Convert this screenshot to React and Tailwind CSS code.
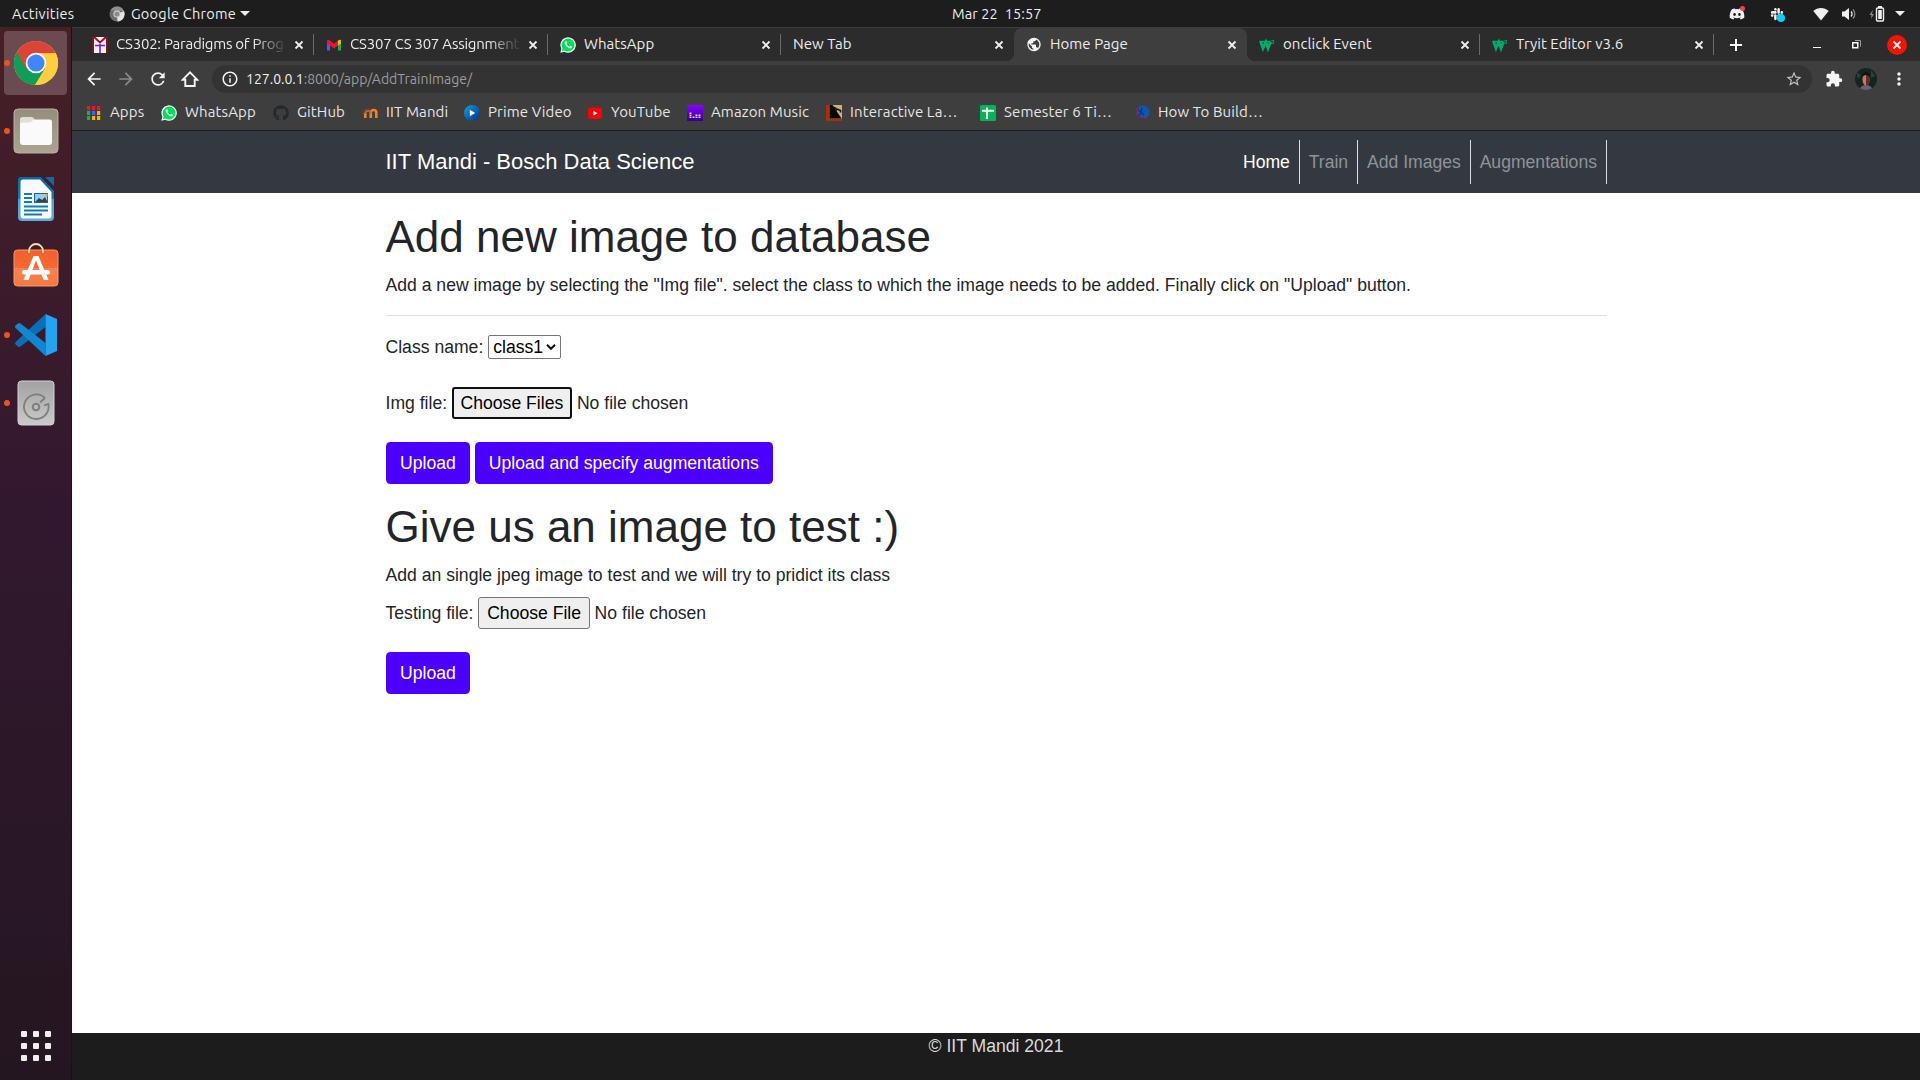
import React from "react";
import { FaGithub, FaDiscord, FaSlack } from "react-icons/fa";
import {
  MdArrowBack,
  MdArrowForward,
  MdRefresh,
  MdInfoOutline,
  MdStarBorder,
  MdExtension,
  MdMoreVert,
  MdPublic,
} from "react-icons/md";

/* ---------- favicons ---------- */

const WhatsAppIcon = () => (
  <svg viewBox="0 0 16 16" className="size-4">
    <path d="M0.300 15.700L1.400 11.800A7.700 7.700 0 1 1 4.300 14.700Z" fill="#fff" />
    <path d="M1.800 14.200L2.600 11.500A6.500 6.500 0 1 1 4.600 13.500Z" fill="#00e15b" />
    <path
      d="M5.600 4.200C4.600 4.800 4.400 6 5.100 7.300C6.200 9.400 7.600 10.700 9.600 11.300C10.800 11.600 11.800 10.900 11.900 9.700L10.200 8.800L9.300 9.700C8.200 9.300 7.100 8.300 6.500 7.100L7.200 6.200L6.500 4.300Z"
      fill="#fff"
    />
  </svg>
);

const CourseIcon = () => (
  <svg viewBox="0 0 16 16" className="size-4">
    <path d="M0 0h16v16H0z" fill="#f1f1f6" />
    <path d="M1 0v16M15 0v16" stroke="#8c0d1c" strokeWidth="2" />
    <path d="M2 0l6 5.500l6-5.500" fill="none" stroke="#a0122a" strokeWidth="2" />
    <path d="M3 8.500h10M8 7v9" stroke="#7a1fc4" strokeWidth="1.600" />
  </svg>
);

const GmailIcon = () => (
  <svg viewBox="0 0 16 16" className="size-4">
    <path d="M1 5h3v8.500H1z" fill="#5a57f0" />
    <path d="M12 5h3v8.500h-3z" fill="#14b456" />
    <path d="M12 3.800c1-1.500 3-1.300 3 .400V6.500l-3 2z" fill="#fbbc04" />
    <path d="M1 4c0-1.600 1.500-1.700 2.500-.8L8 6.800l4-3.200v5L8 11.600 4 8.600 1 6.500z" fill="#f5112e" />
  </svg>
);

const W3Icon = () => (
  <svg viewBox="0 0 16 16" className="size-4">
    <path d="M0.200 3.800h11.600l-1.600 1.700H1z" fill="#04aa6d" />
    <path
      d="M1.500 4.500L4 11.300L6.800 5L9 11.300L11.500 4.500"
      fill="none"
      stroke="#04aa6d"
      strokeWidth="2.800"
    />
    <text x="12" y="6.800" fontSize="6" fontWeight="700" fontFamily="Lato, sans-serif" fill="#04aa6d">
      3
    </text>
  </svg>
);

const AppsIcon = () => (
  <svg viewBox="0 0 16 16" className="size-4">
    {[
      ["#f5112e", 1, 1],
      ["#f5112e", 6, 1],
      ["#f5112e", 11, 1],
      ["#12b45a", 1, 6],
      ["#4a5ef5", 6, 6],
      ["#fbb404", 11, 6],
      ["#12b45a", 1, 11],
      ["#fbb404", 6, 11],
      ["#fbb404", 11, 11],
    ].map(([c, x, y]) => (
      <rect key={x + "-" + y} x={x} y={y} width="3.200" height="4" fill={c} />
    ))}
  </svg>
);

const MoodleIcon = () => (
  <svg viewBox="0 0 16 16" className="size-4">
    <path d="M0 5L6 2.800L9 4L4 6.500Z" fill="#5a4335" />
    <path d="M1 5.500v4" stroke="#6a4a38" strokeWidth="1" />
    <path
      d="M3.300 13V8M8.800 13V7.500c0-3.300 5.500-3.300 5.500 0V13"
      fill="none"
      stroke="#f58220"
      strokeWidth="2.600"
    />
    <path d="M3.300 9c0-4 5.500-4 5.500-.5" fill="none" stroke="#b86a35" strokeWidth="1.800" />
  </svg>
);

const PrimeIcon = () => (
  <svg viewBox="0 0 16 16" className="size-4">
    <defs>
      <linearGradient id="prime" x1="0" y1="0" x2="1" y2="1">
        <stop offset="0" stopColor="#0aa0dc" />
        <stop offset="0.600" stopColor="#0a5cb0" />
        <stop offset="1" stopColor="#0a2a78" />
      </linearGradient>
    </defs>
    <circle cx="8" cy="8" r="8" fill="url(#prime)" />
    <path d="M5.800 4.800l5.400 3.200-5.400 3.200z" fill="#fff" />
  </svg>
);

const YouTubeIcon = () => (
  <svg viewBox="0 0 16 16" className="size-4">
    <rect x="1" y="2.500" width="14" height="11.500" rx="2.500" fill="#fb0007" />
    <path d="M6.500 6l4 2.200-4 2.200z" fill="#fff" />
  </svg>
);

const AmazonMusicIcon = () => (
  <svg viewBox="0 0 16 16" className="size-4">
    <defs>
      <linearGradient id="music" x1="0" y1="0" x2="0" y2="1">
        <stop offset="0" stopColor="#8a00ff" />
        <stop offset="1" stopColor="#35008c" />
      </linearGradient>
    </defs>
    <rect width="16" height="16" fill="url(#music)" />
    <path
      d="M3.500 13V7.500M6.500 13v-2M9.500 13V9.500M12.500 13V9"
      stroke="#e9c8ff"
      strokeWidth="2"
      strokeDasharray="1.500 0.500"
    />
  </svg>
);

const InteractiveIcon = () => (
  <svg viewBox="0 0 16 16" className="size-4">
    <rect width="16" height="16" fill="#a33207" />
    <rect x="3.500" width="12.500" height="13.500" fill="#cfb07a" />
    <path d="M3.500 0h3l9 13.500h-12z" fill="#0b0908" />
    <path d="M7 2l3 1.500v2.500M11 4l3.500 1.500v2" fill="none" stroke="#1a1410" strokeWidth="1.600" />
  </svg>
);

const SheetsIcon = () => (
  <svg viewBox="0 0 16 16" className="size-4">
    <rect width="16" height="16" rx="1.500" fill="#07b358" />
    <path d="M2 5.700h12M7 2.500v11.500" stroke="#fff" strokeWidth="1.900" />
  </svg>
);

const HowToIcon = () => (
  <svg viewBox="0 0 16 16" className="size-4">
    <circle cx="8.800" cy="7.200" r="6.800" fill="#0d58a8" />
    <path
      d="M3.500 2.500A7.500 7.500 0 0 0 14 12.500"
      fill="none"
      stroke="#b01030"
      strokeWidth="1.500"
      strokeDasharray="2.500 0.600"
    />
    <path d="M4 5l3 2-2 4M8 3l-1 4 3 3" fill="none" stroke="#0a3872" strokeWidth="1.200" />
  </svg>
);

const CloseX = () => (
  <svg viewBox="0 0 10 10" className="size-[10px] shrink-0">
    <path d="M1.500 1.500l7 7M8.500 1.500l-7 7" stroke="#eeeeee" strokeWidth="1.800" />
  </svg>
);

/* ---------- desktop top bar ---------- */

const TopBar = () => (
  <div className="flex h-[27px] items-center bg-[#1d1d1d] text-[14.500px] text-[#ececec]">
    <span className="w-[98px] pt-px pl-[12px] tracking-[0.300px]">Activities</span>
    <svg viewBox="0 0 16 16" className="mr-[6px] ml-[11px] size-4">
      <circle cx="8" cy="8" r="7.500" fill="#6e6e6e" />
      <path d="M8 8L15 5A7.500 7.500 0 0 1 8.500 15.500Z" fill="#e4e4e4" />
      <path d="M1.500 4.300A7.500 7.500 0 0 1 14.900 5H8Z" fill="#8e8e8e" />
      <circle cx="8" cy="8" r="3.600" fill="#d8d8d8" />
      <circle cx="8" cy="8" r="2.600" fill="#8a8a8a" />
    </svg>
    <span className="w-[109px] tracking-[0.250px] whitespace-nowrap">Google Chrome</span>
    <span className="size-0 border-x-[5px] border-t-[5px] border-x-transparent border-t-[#ececec]" />
    <span className="ml-[702px] w-[120px] tracking-[0.100px] whitespace-pre">Mar 22  15:57</span>
    <div className="ml-auto flex h-full items-center text-[#f0f0f0]">
      <span className="relative mr-[25px] flex">
        <FaDiscord className="size-4" />
        <span className="absolute top-0 right-0 size-[5px] rounded-full bg-[#f04747]" />
      </span>
      <span className="relative mr-[29px] flex">
        <FaSlack className="size-[14px]" />
        <span className="absolute -right-px -bottom-px size-[8px] rounded-full bg-[#00d0ff]" />
      </span>
      <svg viewBox="0 0 16 14" className="mr-[12px] h-[14px] w-4">
        <path d="M0.300 4C4.500 0 11.500 0 15.700 4L8 13.500Z" fill="#f0f0f0" />
      </svg>
      <svg viewBox="0 0 16 14" className="mr-[12px] h-[14px] w-4">
        <path d="M1 4.500h2.500L8 1v12L3.500 9.500H1z" fill="#f0f0f0" />
        <path d="M10 4.500a3.500 3.500 0 0 1 0 5" fill="none" stroke="#f0f0f0" strokeWidth="1.300" />
        <path d="M12 2.500a6.500 6.500 0 0 1 0 9" fill="none" stroke="#8a8a8a" strokeWidth="1.300" />
      </svg>
      <svg viewBox="0 0 16 16" className="mr-[10px] size-4">
        <path d="M4 3.500L0.500 9h2L2 13l3-5H3z" fill="#8a8a8a" />
        <path d="M9 0h4v2H9z" fill="#f0f0f0" />
        <rect x="7.500" y="2" width="7" height="13" rx="1" fill="none" stroke="#f0f0f0" strokeWidth="1.400" />
        <rect x="9.200" y="4" width="3.600" height="9" fill="#f0f0f0" />
      </svg>
      <span className="mr-[15px] size-0 border-x-[5px] border-t-[5px] border-x-transparent border-t-[#f0f0f0]" />
    </div>
  </div>
);

/* ---------- dock ---------- */

const DockChrome = () => (
  <svg viewBox="0 0 48 48" className="size-[46px]">
    <circle cx="24" cy="24" r="23" fill="#fdd03f" />
    <path d="M24 24L4.100 12.500A23 23 0 0 0 23 47L34 29.700Z" fill="#0f9d58" />
    <path d="M24 24L13.500 30L4.100 12.500A23 23 0 0 1 44.600 13.700H24Z" fill="#db4437" />
    <path d="M24 13.700h20.600A23 23 0 0 1 23 47L33.500 29.500Z" fill="#ffcd40" />
    <circle cx="24" cy="24" r="10.800" fill="#f4f4f4" />
    <circle cx="24" cy="24" r="8.900" fill="#4285f4" />
  </svg>
);

const DockFiles = () => (
  <svg viewBox="0 0 46 46" className="size-[46px]">
    <defs>
      <linearGradient id="files" x1="0" y1="0" x2="0" y2="1">
        <stop offset="0" stopColor="#968e7c" />
        <stop offset="1" stopColor="#aca491" />
      </linearGradient>
    </defs>
    <rect x="1" y="1" width="44" height="44" rx="4" fill="url(#files)" stroke="#b9b19f" />
    <path d="M7 11.500q0-2.500 2.500-2.500h9q2 0 3 2l1.500 3H39V20H7z" fill="#e2ded3" />
    <path d="M7 16.500q0-2 2-2h7q2 0 3-1.500t3-1.500h14.500q2.500 0 2.500 2.500V34q0 3-3 3H10q-3 0-3-3z" fill="#fafafa" />
  </svg>
);

const DockWriter = () => (
  <svg viewBox="0 0 38 46" className="h-[46px] w-[38px]">
    <defs>
      <linearGradient id="writer" x1="0" y1="0" x2="0" y2="1">
        <stop offset="0" stopColor="#0b69a3" />
        <stop offset="0.500" stopColor="#1678b4" />
        <stop offset="0.510" stopColor="#4ba0d0" />
        <stop offset="1" stopColor="#5cacd8" />
      </linearGradient>
    </defs>
    <path d="M4 1h20l13 14v26q0 4-4 4H5q-4 0-4-4V4q0-3 3-3z" fill="url(#writer)" />
    <path d="M28 1h9v9z" fill="#0e6ba6" />
    <path d="M6 3.500h17L34.500 16v24q0 2.500-2.500 2.500H6q-2.500 0-2.500-2.500V6q0-2.500 2.500-2.500z" fill="#fafafa" />
    <path d="M7 18h8M7 22h8M7 26h8M7 30.500h24M7 34.500h24M7 38.500h18" stroke="#0f7ab8" strokeWidth="2" />
    <rect x="17.500" y="17.500" width="13" height="9" fill="#8fd0ee" stroke="#0f6ca8" />
    <path d="M18 26l4-4 3 2 3-3 2.500 5z" fill="#38414a" />
    <path d="M27 18h3.500v3z" fill="#f6b40e" />
  </svg>
);

const DockSoftware = () => (
  <svg viewBox="0 0 46 44" className="mb-[5px] h-[44px] w-[46px]">
    <defs>
      <linearGradient id="soft" x1="0" y1="0" x2="0" y2="1">
        <stop offset="0" stopColor="#f1602a" />
        <stop offset="0.500" stopColor="#f36a35" />
        <stop offset="0.510" stopColor="#f58356" />
        <stop offset="1" stopColor="#f4783e" />
      </linearGradient>
    </defs>
    <rect x="1" y="7" width="44" height="36" rx="3.500" fill="url(#soft)" stroke="#f79a70" />
    <path d="M16 10V8a7 7 0 0 1 14 0v2" fill="none" stroke="#f6dfa8" strokeWidth="1.800" />
    <path d="M20.500 13h5L35.500 37h-4.800L23 17.500l-7.500 19.500H10.500z" fill="#fff" />
    <rect x="9" y="27" width="28" height="4.500" rx="2.200" fill="#fff" />
  </svg>
);

const DockCode = () => (
  <svg viewBox="0 0 44 44" className="size-[44px]">
    <path d="M31.500 1v13L6.500 33.500Q5 34.500 3.500 33.300L1.600 31.500q-1.300-1.300 0-2.600z" fill="#0a6fb8" />
    <path d="M31.500 43V30L6.500 10.500Q5 9.500 3.500 10.700L1.600 12.500q-1.300 1.300 0 2.600z" fill="#1187d2" />
    <path d="M31.500 1L43 6v32l-11.500 5z" fill="#25a3f0" />
  </svg>
);

const DockDisk = () => (
  <svg viewBox="0 0 38 46" className="h-[46px] w-[38px]">
    <defs>
      <linearGradient id="disk" x1="0" y1="0" x2="0" y2="1">
        <stop offset="0" stopColor="#a2a2a2" />
        <stop offset="1" stopColor="#cacaca" />
      </linearGradient>
    </defs>
    <rect x="1" y="1" width="36" height="44" rx="3.500" fill="url(#disk)" stroke="#d2d2d2" />
    <path
      d="M28 18l-5 4.500M28 18A12.300 12.300 0 1 0 31.300 24l-4.300 1.500"
      fill="none"
      stroke="#7e7e7e"
      strokeWidth="1.800"
    />
    <circle cx="19" cy="27" r="3.300" fill="none" stroke="#7e7e7e" strokeWidth="2" />
  </svg>
);

const DockItem = ({ running, active, children }) => (
  <div className="relative flex h-[68px] items-center justify-center">
    {active && <span className="absolute inset-x-[4px] top-[2px] bottom-[2px] rounded-[4px] bg-white/20" />}
    {running && <span className="absolute left-[4px] size-[6px] rounded-full bg-[#e95420]" />}
    <span className="relative flex">{children}</span>
  </div>
);

const Dock = () => (
  <aside className="flex w-[72px] shrink-0 flex-col border-r border-[#1c1018] bg-linear-to-b from-[#481f25] via-[#32182f] via-45% to-[#241620] pt-[2px]">
    <DockItem running active>
      <DockChrome />
    </DockItem>
    <DockItem running>
      <DockFiles />
    </DockItem>
    <DockItem>
      <DockWriter />
    </DockItem>
    <DockItem>
      <DockSoftware />
    </DockItem>
    <DockItem running>
      <DockCode />
    </DockItem>
    <DockItem running>
      <DockDisk />
    </DockItem>
    <div className="mt-auto mb-[19px] ml-[21px] grid w-[30px] grid-cols-3 gap-[6px]">
      {[0, 1, 2, 3, 4, 5, 6, 7, 8].map((i) => (
        <span key={i} className="size-[6px] rounded-[1px] bg-[#efefec]" />
      ))}
    </div>
  </aside>
);

/* ---------- browser chrome ---------- */

const tabs = [
  { title: "CS302: Paradigms of Prog", icon: <CourseIcon />, cls: "w-[233px] pl-[11px]", sep: true, fade: true },
  { title: "CS307 CS 307 Assignment", icon: <GmailIcon />, cls: "w-[234px] pl-[12px]", sep: true, fade: true },
  { title: "WhatsApp", icon: <WhatsAppIcon />, cls: "w-[233px] pl-[12px]", sep: true },
  { title: "New Tab", cls: "w-[233px] pl-[12px]" },
  {
    title: "Home Page",
    icon: <MdPublic className="size-[17px] text-[#f5f5f5]" />,
    cls: "w-[233px] pl-[12px]",
    active: true,
  },
  { title: "onclick Event", icon: <W3Icon />, cls: "w-[233px] pl-[12px]", sep: true },
  { title: "Tryit Editor v3.6", icon: <W3Icon />, cls: "w-[234px] pl-[12px]", sep: true },
];

const Tab = ({ title, icon, cls, sep, active, fade }) => (
  <div
    className={
      "relative flex shrink-0 items-center pr-[10px] " + cls + (active ? " rounded-t-[8px] bg-[#3e3e3e]" : "")
    }
  >
    {icon && <span className="mr-[8px] flex size-4 shrink-0 items-center justify-center">{icon}</span>}
    <span
      className={
        "mr-[5px] min-w-0 flex-1 overflow-hidden pb-px whitespace-nowrap" +
        (fade ? " mask-r-from-80% mask-r-to-99% tracking-[-0.250px]" : "")
      }
    >
      {title}
    </span>
    <CloseX />
    {sep && <span className="absolute top-[6px] right-0 h-[21px] w-px bg-[#6a6a6a]" />}
    {active && (
      <>
        <span className="absolute bottom-0 -left-[8px] size-[8px] bg-radial-[at_0_0] from-transparent from-[8px] to-[#3e3e3e] to-[8px]" />
        <span className="absolute -right-[8px] bottom-0 size-[8px] bg-radial-[at_100%_0] from-transparent from-[8px] to-[#3e3e3e] to-[8px]" />
      </>
    )}
  </div>
);

const TabStrip = () => (
  <div className="flex h-[34px] border-t border-[#3c3c3c] bg-[#2c2c2c] pl-[9px] text-[15px] tracking-[0.050px] text-[#ececec]">
    {tabs.map((t) => (
      <Tab key={t.title} {...t} />
    ))}
    <div className="flex flex-1 items-center">
      <svg viewBox="0 0 12 12" className="ml-[16px] size-[12px]">
        <path d="M6 0v12M0 6h12" stroke="#fff" strokeWidth="2" />
      </svg>
      <span className="mt-[5px] ml-[71px] h-px w-[8px] bg-white" />
      <svg viewBox="0 0 9 9" className="ml-[31px] size-[9px]">
        <path d="M3 0.500h5.500v6" fill="none" stroke="#a0a0a0" />
        <rect x="0.750" y="2.750" width="5" height="5" fill="none" stroke="#fff" strokeWidth="1.500" />
      </svg>
      <span className="ml-[26px] flex size-[20px] items-center justify-center rounded-full bg-[#f01505]">
        <CloseX />
      </span>
    </div>
  </div>
);

const Toolbar = () => (
  <div className="flex h-[36px] items-center bg-[#3e3e3e] pl-[12px] text-[#f5f5f5]">
    <MdArrowBack className="size-[20px]" />
    <MdArrowForward className="ml-[12px] size-[20px] text-[#8a8a8a]" />
    <MdRefresh className="ml-[12px] size-[20px]" />
    <svg viewBox="0 0 18 18" className="ml-[13px] size-[18px]">
      <path
        d="M1.800 9.700L9 2.300l7.200 7.400h-2.500v6.300H4.300V9.700z"
        fill="none"
        stroke="#f5f5f5"
        strokeWidth="1.900"
      />
    </svg>
    <div className="ml-[13px] flex h-[28px] w-[1600px] items-center rounded-full bg-[#333333] pr-[9px] pl-[9px]">
      <MdInfoOutline className="size-[18px]" />
      <span className="ml-[7px] text-[14px] text-[#9c9c9c]">
        <span className="text-[#f0f0f0]">127.0.0.1</span>:8000/app/AddTrainImage/
      </span>
      <MdStarBorder className="ml-auto size-[18px] text-[#c0c0c0]" />
    </div>
    <MdExtension className="ml-[13px] size-[18px]" />
    <svg viewBox="0 0 22 22" className="ml-[12px] size-[22px] rounded-full">
      <rect width="22" height="22" fill="#13261d" />
      <path d="M1 4l5 3-3 4zM16 2l4 6-4 2z" fill="#24463a" />
      <path d="M4 22q2-5 7-5t7 5z" fill="#6d6075" />
      <ellipse cx="11" cy="11.500" rx="3.500" ry="6" fill="#c07a5c" />
      <path d="M11 6c3 0 4 3 3.500 7s-2 4.500-3.500 4.500z" fill="#6a2c22" />
      <path d="M6.800 9.500c-.5-7 9-7 8.400 0-2-3.500-6.400-3.500-8.400 0z" fill="#16100f" />
    </svg>
    <MdMoreVert className="ml-[12px] size-[20px]" />
  </div>
);

const bookmarks = [
  { label: "Apps", icon: <AppsIcon />, cls: "w-[75px]" },
  { label: "WhatsApp", icon: <WhatsAppIcon />, cls: "w-[112px]" },
  { label: "GitHub", icon: <FaGithub className="size-4 text-[#24292e]" />, cls: "w-[89px]" },
  { label: "IIT Mandi", icon: <MoodleIcon />, cls: "w-[102px]" },
  { label: "Prime Video", icon: <PrimeIcon />, cls: "w-[123px]" },
  { label: "YouTube", icon: <YouTubeIcon />, cls: "w-[100px]" },
  { label: "Amazon Music", icon: <AmazonMusicIcon />, cls: "w-[139px]" },
  { label: "Interactive La…", icon: <InteractiveIcon />, cls: "w-[154px]" },
  { label: "Semester 6 Ti…", icon: <SheetsIcon />, cls: "w-[154px]" },
  { label: "How To Build…", icon: <HowToIcon />, cls: "w-[140px]" },
];

const BookmarksBar = () => (
  <div className="flex h-[34px] items-center border-b border-[#202020] bg-[#3e3e3e] pb-[2px] pl-[14px] text-[15px] tracking-[0.120px] text-[#e6e6e6]">
    {bookmarks.map((b) => (
      <div key={b.label} className={"flex shrink-0 items-center gap-2 whitespace-nowrap " + b.cls}>
        {b.icon}
        <span>{b.label}</span>
      </div>
    ))}
  </div>
);

/* ---------- page ---------- */

const NavLink = ({ children, active }) => (
  <span
    className={
      "flex h-[44px] items-center border-r border-[#dcdde0] pr-[9px] pl-[8.800px] " +
      (active ? "text-white" : "text-[#8f9297]")
    }
  >
    {children}
  </span>
);

const PageNav = () => (
  <nav className="flex h-[62px] items-center justify-between bg-[#343941] pr-[313px] pl-[313.500px]">
    <span className="text-[22px] text-white">IIT Mandi - Bosch Data Science</span>
    <div className="flex">
      <NavLink active>Home</NavLink>
      <NavLink>Train</NavLink>
      <NavLink>Add Images</NavLink>
      <NavLink>Augmentations</NavLink>
    </div>
  </nav>
);

const Primary = ({ children }) => (
  <button className="flex h-[42px] items-center rounded-[4.400px] bg-[#4b00ff] px-[14px] text-white">
    {children}
  </button>
);

const Page = () => (
  <main className="flex min-h-0 flex-1 flex-col bg-white font-['Liberation_Sans',Arial,sans-serif] text-[17.600px] leading-[26.400px] text-[#212529]">
    <PageNav />
    <div className="flex-1 pt-[17.600px] pr-[313px] pl-[313.500px]">
      <h1 className="text-[44px] leading-[52.800px]">Add new image to database</h1>
      <p className="mt-[8.800px]">
        Add a new image by selecting the "Img file". select the class to which the image needs to be added. Finally
        click on "Upload" button.
      </p>
      <hr className="mt-[16.400px] border-t border-[#dedede]" />
      <div className="mt-[19px] flex h-[24px] items-center">
        <span>Class name:</span>
        <span className="ml-[4.500px] flex h-[24px] w-[73px] items-center rounded-[2px] border border-[#767676] bg-white pl-[4.500px] text-black">
          class1
          <svg viewBox="0 0 10 8" className="ml-[3px] h-[8px] w-[10px]">
            <path d="M1 1.800l4 4 4-4" fill="none" stroke="#111" strokeWidth="2" />
          </svg>
        </span>
      </div>
      <div className="mt-[28px] flex h-[32px] items-center">
        <span>Img file:</span>
        <span className="ml-[4.800px] flex h-[32px] w-[120px] items-center justify-center rounded-[3px] border-2 border-[#101010] bg-[#efefef] text-black">
          Choose Files
        </span>
        <span className="ml-[5px]">No file chosen</span>
      </div>
      <div className="mt-[23px] ml-[0.500px] flex gap-[5px]">
        <Primary>Upload</Primary>
        <Primary>Upload and specify augmentations</Primary>
      </div>
      <h1 className="mt-[17.200px] text-[44px] leading-[52.800px]">Give us an image to test :)</h1>
      <p className="mt-[8.100px]">Add an single jpeg image to test and we will try to pridict its class</p>
      <div className="mt-[8.800px] flex h-[32px] items-center">
        <span>Testing file:</span>
        <span className="ml-[4.600px] flex h-[32px] w-[112px] items-center justify-center rounded-[3px] border border-[#767676] bg-[#efefef] text-black">
          Choose File
        </span>
        <span className="ml-[4.500px]">No file chosen</span>
      </div>
      <div className="mt-[23px] ml-[0.500px] flex">
        <Primary>Upload</Primary>
      </div>
    </div>
    <footer className="h-[47px] bg-[#1c1c1c] text-center text-[#dadada]">© IIT Mandi 2021</footer>
  </main>
);

export default function App() {
  return (
    <div className="flex h-[1080px] w-[1920px] flex-col overflow-hidden font-['Ubuntu','Noto_Sans',sans-serif]">
      <TopBar />
      <div className="flex min-h-0 flex-1">
        <Dock />
        <div className="flex min-w-0 flex-1 flex-col">
          <TabStrip />
          <Toolbar />
          <BookmarksBar />
          <Page />
        </div>
      </div>
    </div>
  );
}
